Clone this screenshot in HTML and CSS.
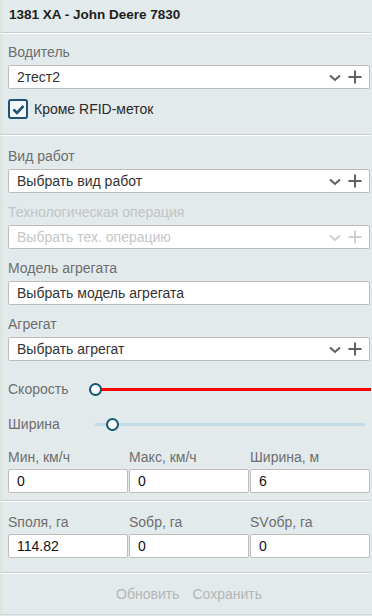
FILE: index.html
```html
<!DOCTYPE html>
<html lang="ru">
<head>
<meta charset="utf-8">
<link rel="stylesheet" href="styles.css">
</head>
<body>
<div class="edge"></div>
<div class="panel">
  <div class="title">1381 XA - John Deere 7830</div>
  <div class="sep"></div>

  <div class="field first">
    <div class="label">Водитель</div>
    <div class="select">
      <span class="value">2тест2</span>
      <span class="icons">
        <svg class="chev" width="12" height="8" viewBox="0 0 12 8"><path d="M1 1.5 L6 6 L11 1.5" fill="none" stroke="currentColor" stroke-width="2"/></svg>
        <svg class="plus" width="14" height="14" viewBox="0 0 14 14"><path d="M7 0.5 V13.5 M0.5 7 H13.5" fill="none" stroke="currentColor" stroke-width="2"/></svg>
      </span>
    </div>
  </div>

  <label class="check">
    <span class="box"><svg width="13" height="11" viewBox="0 0 13 11"><path d="M1.5 5.5 L5 9 L11.5 2" fill="none" stroke="currentColor" stroke-width="2.6"/></svg></span>
    <span class="check-text">Кроме RFID-меток</span>
  </label>
  <div class="sep sep2"></div>

  <div class="field f2">
    <div class="label">Вид работ</div>
    <div class="select">
      <span class="value">Выбрать вид работ</span>
      <span class="icons">
        <svg class="chev" width="12" height="8" viewBox="0 0 12 8"><path d="M1 1.5 L6 6 L11 1.5" fill="none" stroke="currentColor" stroke-width="2"/></svg>
        <svg class="plus" width="14" height="14" viewBox="0 0 14 14"><path d="M7 0.5 V13.5 M0.5 7 H13.5" fill="none" stroke="currentColor" stroke-width="2"/></svg>
      </span>
    </div>
  </div>

  <div class="field disabled">
    <div class="label">Технологическая операция</div>
    <div class="select">
      <span class="value">Выбрать тех. операцию</span>
      <span class="icons">
        <svg class="chev" width="12" height="8" viewBox="0 0 12 8"><path d="M1 1.5 L6 6 L11 1.5" fill="none" stroke="currentColor" stroke-width="2"/></svg>
        <svg class="plus" width="14" height="14" viewBox="0 0 14 14"><path d="M7 0.5 V13.5 M0.5 7 H13.5" fill="none" stroke="currentColor" stroke-width="2"/></svg>
      </span>
    </div>
  </div>

  <div class="field">
    <div class="label">Модель агрегата</div>
    <div class="select">
      <span class="value">Выбрать модель агрегата</span>
    </div>
  </div>

  <div class="field">
    <div class="label">Агрегат</div>
    <div class="select">
      <span class="value">Выбрать агрегат</span>
      <span class="icons">
        <svg class="chev" width="12" height="8" viewBox="0 0 12 8"><path d="M1 1.5 L6 6 L11 1.5" fill="none" stroke="currentColor" stroke-width="2"/></svg>
        <svg class="plus" width="14" height="14" viewBox="0 0 14 14"><path d="M7 0.5 V13.5 M0.5 7 H13.5" fill="none" stroke="currentColor" stroke-width="2"/></svg>
      </span>
    </div>
  </div>

  <div class="slider-row speed">
    <div class="slider-label">Скорость</div>
    <div class="track red">
      <span class="thumb"></span>
    </div>
  </div>

  <div class="slider-row width">
    <div class="slider-label">Ширина</div>
    <div class="track blue">
      <span class="thumb thumb-w"></span>
    </div>
  </div>

  <div class="grid3">
    <div class="label">Мин, км/ч</div>
    <div class="label">Макс, км/ч</div>
    <div class="label">Ширина, м</div>
    <div class="input">0</div>
    <div class="input">0</div>
    <div class="input">6</div>
  </div>
  <div class="sep sep3"></div>

  <div class="grid3 g2">
    <div class="label">Sполя, га</div>
    <div class="label">Sобр, га</div>
    <div class="label">SVобр, га</div>
    <div class="input">114.82</div>
    <div class="input">0</div>
    <div class="input">0</div>
  </div>
  <div class="sep sep4"></div>

  <div class="buttons">
    <span class="btn">Обновить</span>
    <span class="btn">Сохранить</span>
  </div>
</div>
</body>
</html>
```

FILE: styles.css
```css
html, body {
  margin: 0;
  padding: 0;
}
body {
  width: 372px;
  height: 616px;
  background: #e3eaec;
  font-family: "Liberation Sans", Arial, sans-serif;
  font-size: 14px;
  display: flex;
  overflow: hidden;
}
.edge {
  width: 1px;
  flex: none;
  background: #dfe8dc;
}
.panel {
  flex: 1;
  height: 614px;
  border-bottom: 1px solid #cfd6d8;
  padding: 0 2px 0 7px;
  box-shadow: inset 1px 0 0 #d8e0e2;
}
.title {
  font-weight: bold;
  font-size: 13.5px;
  color: #1e1e1e;
  line-height: 20px;
  padding: 5px 0 7px 1px;
}
.sep {
  margin-left: -7px;
  height: 1px;
  background: #c6cbcd;
  border-bottom: 1px solid #ffffff;
}
.label {
  line-height: 16px;
  color: #6e6e6e;
  height: 16px;
  margin-bottom: 5px;
  white-space: nowrap;
}
.field {
  margin-top: 11px;
}
.field.first {
  margin-top: 10px;
}
.field.f2 {
  margin-top: 12px;
}
.select, .input {
  box-sizing: border-box;
  height: 24px;
  background: #ffffff;
  border: 1px solid #bdbdbd;
  border-radius: 2px;
  display: flex;
  align-items: center;
  padding: 0 7px 0 8px;
  color: #333333;
  line-height: 22px;
}
.value {
  flex: 1;
  white-space: nowrap;
}
.icons {
  display: flex;
  align-items: center;
  gap: 7px;
  color: #5f5f5f;
}
.chev {
  margin-top: 1px;
}
.disabled .label {
  color: #c2c5c6;
}
.disabled .select {
  color: #c6c6c6;
}
.disabled .icons {
  color: #cfcfcf;
}
.check {
  display: flex;
  align-items: center;
  margin-top: 10px;
  height: 20px;
  gap: 6px;
}
.box {
  box-sizing: border-box;
  width: 20px;
  height: 20px;
  border: 2px solid #1d5475;
  border-radius: 3px;
  background: #f4f7f8;
  color: #1d5475;
  display: flex;
  align-items: center;
  justify-content: center;
}
.check-text {
  color: #2a2a2a;
}
.sep2 {
  margin-top: 15px;
}
.slider-row {
  display: flex;
  align-items: center;
  height: 20px;
}
.slider-row.speed {
  margin-top: 18px;
}
.slider-row.width {
  margin-top: 15px;
}
.slider-label {
  width: 81px;
  color: #6e6e6e;
  flex: none;
}
.track {
  flex: 1;
  height: 3px;
  position: relative;
  display: flex;
  align-items: center;
}
.track.red {
  background: linear-gradient(to right, transparent 5px, #ff0000 5px);
  margin-right: -1px;
}
.track.blue {
  background: #c3dbe4;
  margin-left: 6px;
  margin-right: 5px;
}
.thumb {
  position: absolute;
  left: 0;
  top: -5px;
  box-sizing: border-box;
  width: 13px;
  height: 13px;
  border-radius: 50%;
  border: 2.5px solid #0e5576;
  background: #ffffff;
}
.thumb-w {
  left: 11px;
}
.grid3 {
  margin-top: 15px;
  display: grid;
  grid-template-columns: 120px 120px 1fr;
  column-gap: 1px;
}
.grid3 .label {
  margin-bottom: 4px;
}
.grid3 .input {
  color: #111111;
}
.grid3.g2 {
  margin-top: 12px;
}
.sep3 {
  margin-top: 7px;
}
.sep4 {
  margin-top: 14px;
}
.buttons {
  display: flex;
  justify-content: center;
  gap: 13px;
  margin-top: 12px;
  color: #b4b6b7;
  line-height: 16px;
}
```
